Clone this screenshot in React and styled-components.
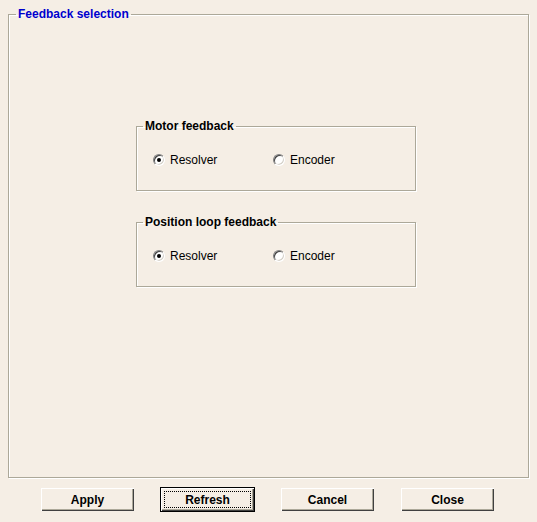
import styled, { createGlobalStyle } from 'styled-components';

const GlobalStyle = createGlobalStyle`
  html, body {
    margin: 0;
    padding: 0;
    background: #f5eee5;
  }
  body {
    font-family: "Liberation Sans", Arial, sans-serif;
    font-size: 11px;
    color: #000;
  }
`;

export default function App() {
  return (
    <>
      <GlobalStyle />
      <Page>
        <OuterGroup>
          <OuterTitle>Feedback selection</OuterTitle>
          <GroupStack>
            <FeedbackGroup title="Motor feedback" />
            <FeedbackGroup title="Position loop feedback" />
          </GroupStack>
        </OuterGroup>
        <ButtonRow>
          <Button>Apply</Button>
          <Button $default>
            <FocusRect>Refresh</FocusRect>
          </Button>
          <Button>Cancel</Button>
          <Button>Close</Button>
        </ButtonRow>
      </Page>
    </>
  );
}

function FeedbackGroup({ title }) {
  return (
    <InnerGroup>
      <InnerTitle>{title}</InnerTitle>
      <RadioRow>
        <RadioLabel>
          <Radio $checked />
          Resolver
        </RadioLabel>
        <RadioLabel>
          <Radio />
          Encoder
        </RadioLabel>
      </RadioRow>
    </InnerGroup>
  );
}

const Page = styled.div`
  width: 537px;
  height: 522px;
  display: flex;
  flex-direction: column;
  padding: 7px 0 0 8px;
  box-sizing: border-box;
`;

const OuterGroup = styled.fieldset`
  margin: 0;
  padding: 0;
  width: 521px;
  height: 471px;
  box-sizing: border-box;
  border: 1px solid #aca899;
  box-shadow: 1px 1px 0 #fff, inset 1px 1px 0 #fff;
  min-inline-size: 0;
`;

const OuterTitle = styled.legend`
  margin-left: 7px;
  padding: 0 2px;
  font-size: 12px;
  line-height: 14px;
  font-weight: bold;
  color: #0000cd;
`;

const GroupStack = styled.div`
  display: flex;
  flex-direction: column;
  gap: 24px;
  padding: 98px 0 0 127px;
`;

const InnerGroup = styled.fieldset`
  margin: 0;
  padding: 0;
  width: 280px;
  height: 72px;
  box-sizing: border-box;
  border: 1px solid #aca899;
  box-shadow: 1px 1px 0 #fff, inset 1px 1px 0 #fff;
  min-inline-size: 0;
`;

const InnerTitle = styled.legend`
  margin-left: 6px;
  padding: 0 2px;
  font-size: 12px;
  line-height: 14px;
  font-weight: bold;
`;

const RadioRow = styled.div`
  display: grid;
  grid-template-columns: 120px 120px;
  padding: 21px 0 0 16px;
`;

const RadioLabel = styled.label`
  display: flex;
  align-items: center;
  gap: 5px;
  font-size: 12px;
  line-height: 12px;
`;

const Radio = styled.span`
  position: relative;
  width: 12px;
  height: 12px;
  border-radius: 50%;
  background: #fff;
  box-sizing: border-box;
  border: 1px solid;
  border-color: #808080 #fff #fff #808080;
  box-shadow: inset 1px 1px 0 #404040, inset -1px -1px 0 #d4d0c8;

  &::after {
    content: '';
    display: ${(p) => (p.$checked ? 'block' : 'none')};
    position: absolute;
    left: 3px;
    top: 3px;
    width: 4px;
    height: 4px;
    border-radius: 50%;
    background: #000;
  }
`;

const ButtonRow = styled.div`
  display: flex;
  gap: 25px;
  padding: 9px 0 0 32px;
`;

const Button = styled.button`
  width: 95px;
  height: 25px;
  padding: 0;
  font-family: "Liberation Sans", Arial, sans-serif;
  font-size: 12px;
  font-weight: bold;
  color: #000;
  background: #f5eee5;
  border: 1px solid ${(p) => (p.$default ? '#000' : 'transparent')};
  box-shadow: inset 1px 1px 0 #fff, inset -1px -1px 0 #404040,
    inset -2px -2px 0 #aca899;
  display: flex;
  align-items: center;
  justify-content: center;
`;

const FocusRect = styled.span`
  flex: 1;
  align-self: stretch;
  margin: 3px;
  border: 1px dotted #000;
  display: flex;
  align-items: center;
  justify-content: center;
`;
